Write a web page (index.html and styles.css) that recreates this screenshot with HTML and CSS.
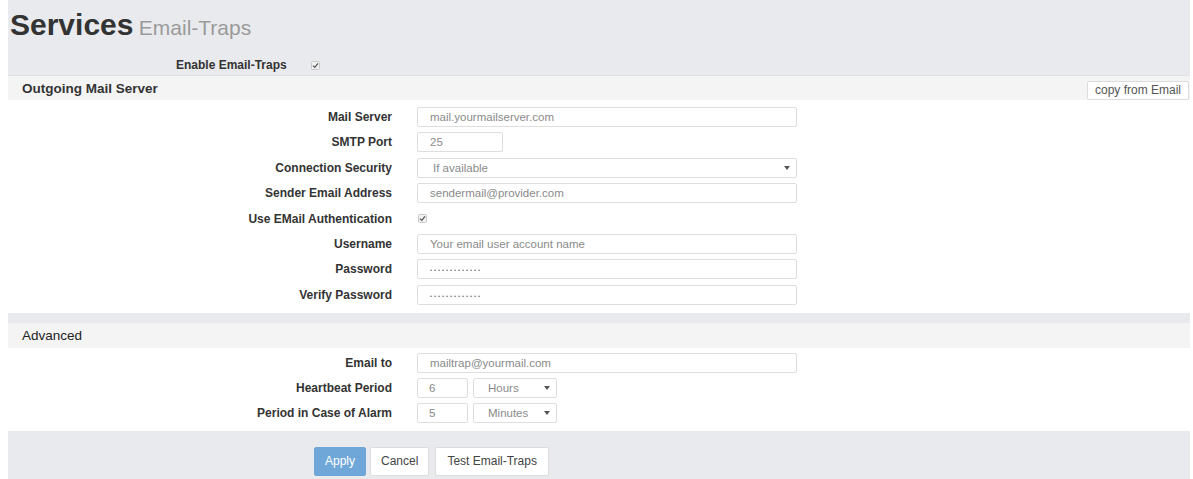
FILE: index.html
```html
<!DOCTYPE html>
<html>
<head>
<meta charset="utf-8">
<link rel="stylesheet" href="styles.css">
</head>
<body>
<div class="panel">
  <div class="top">
    <h1 class="title">Services <span class="subtitle">Email-Traps</span></h1>
    <div class="enable-row">
      <span class="enable-label">Enable Email-Traps</span>
      <span class="check"><svg width="9" height="9" viewBox="0 0 9 9"><rect x="0.5" y="0.5" width="8" height="8" rx="1" fill="#f2f2f2" stroke="#c8c8c8"/><path d="M2 4.6 L3.8 6.4 L7 2.4" fill="none" stroke="#555" stroke-width="1.3"/></svg></span>
    </div>
  </div>

  <div class="section-head">
    <span class="section-title">Outgoing Mail Server</span>
    <span class="copy-btn">copy from Email</span>
  </div>
  <div class="section-body grid-main">
    <div class="label">Mail Server</div>
    <div class="field wide">mail.yourmailserver.com</div>
    <div class="label">SMTP Port</div>
    <div class="field port">25</div>
    <div class="label">Connection Security</div>
    <div class="field wide select"><span class="sel-text">If available</span><svg class="arrow" width="6" height="4" viewBox="0 0 6 4"><path d="M0 0 H6 L3 4 Z" fill="#555"/></svg></div>
    <div class="label">Sender Email Address</div>
    <div class="field wide">sendermail@provider.com</div>
    <div class="label">Use EMail Authentication</div>
    <div class="check-cell"><svg width="9" height="9" viewBox="0 0 9 9"><rect x="0.5" y="0.5" width="8" height="8" rx="1" fill="#f2f2f2" stroke="#c8c8c8"/><path d="M2 4.6 L3.8 6.4 L7 2.4" fill="none" stroke="#555" stroke-width="1.3"/></svg></div>
    <div class="label">Username</div>
    <div class="field wide">Your email user account name</div>
    <div class="label">Password</div>
    <div class="field wide"><span class="dots">•••••••••••••</span></div>
    <div class="label">Verify Password</div>
    <div class="field wide"><span class="dots">•••••••••••••</span></div>
  </div>

  <div class="section-head adv">
    <span class="section-title plain">Advanced</span>
  </div>
  <div class="section-body grid-adv">
    <div class="label">Email to</div>
    <div class="field wide">mailtrap@yourmail.com</div>
    <div class="label">Heartbeat Period</div>
    <div class="pair">
      <div class="field num">6</div>
      <div class="field unit select"><span class="sel-text">Hours</span><svg class="arrow" width="6" height="4" viewBox="0 0 6 4"><path d="M0 0 H6 L3 4 Z" fill="#555"/></svg></div>
    </div>
    <div class="label">Period in Case of Alarm</div>
    <div class="pair">
      <div class="field num">5</div>
      <div class="field unit select"><span class="sel-text">Minutes</span><svg class="arrow" width="6" height="4" viewBox="0 0 6 4"><path d="M0 0 H6 L3 4 Z" fill="#555"/></svg></div>
    </div>
  </div>

  <div class="actions">
    <span class="btn primary">Apply</span>
    <span class="btn">Cancel</span>
    <span class="btn wide-btn">Test Email-Traps</span>
  </div>
</div>
</body>
</html>
```

FILE: styles.css
```css
html, body {
  margin: 0;
  padding: 0;
  background: #ffffff;
}
body {
  font-family: "Liberation Sans", Arial, sans-serif;
  color: #333;
}
.panel {
  width: 1182px;
  margin-left: 8px;
  background: #e9eaed;
  padding-bottom: 2px;
}
.top {
  height: 75px;
}
.title {
  margin: 0;
  padding: 8px 0 0 2px;
  font-size: 30px;
  line-height: 34px;
  font-weight: bold;
  color: #333;
}
.subtitle {
  font-size: 21px;
  font-weight: normal;
  color: #9a9a9a;
  margin-left: -3px;
}
.enable-row {
  display: flex;
  align-items: center;
  height: 26px;
  padding-top: 7px;
  padding-left: 168px;
}
.enable-label {
  font-size: 12px;
  font-weight: bold;
  color: #333;
}
.check {
  display: flex;
  margin-left: 24px;
}
.section-head {
  height: 25px;
  box-sizing: border-box;
  background: #f4f4f5;
  border-top: 1px solid #e0e1e4;
  display: flex;
  justify-content: space-between;
  align-items: center;
  padding-left: 14px;
}
.section-title {
  font-size: 13.5px;
  font-weight: bold;
  color: #333;
}
.section-title.plain {
  font-weight: normal;
  font-size: 13.5px;
  color: #222;
}
.copy-btn {
  align-self: flex-end;
  height: 19px;
  box-sizing: border-box;
  margin-right: 1px;
  padding: 0 7px;
  background: #fff;
  border: 1px solid #dcdcdc;
  border-radius: 2px;
  font-size: 12px;
  line-height: 17px;
  color: #555;
}
.section-body {
  background: #fff;
  display: grid;
  grid-template-columns: 384px 1fr;
  column-gap: 25px;
  align-items: center;
}
.grid-main {
  padding: 7px 0 8px;
  row-gap: 5.4px;
  margin-bottom: 10px;
}
.adv {
  border-top: none;
}
.grid-adv {
  padding: 5px 0 8px;
  row-gap: 5px;
}
.label {
  font-size: 12px;
  font-weight: bold;
  color: #333;
  text-align: right;
  line-height: 20px;
}
.field {
  height: 20px;
  box-sizing: border-box;
  border: 1px solid #dedede;
  border-radius: 2px;
  background: #fff;
  font-size: 11.5px;
  line-height: 18px;
  color: #8a8a8a;
  padding-left: 12px;
  white-space: nowrap;
}
.wide {
  width: 380px;
}
.port {
  width: 86px;
}
.select {
  display: flex;
  align-items: center;
  justify-content: space-between;
  padding-right: 6px;
}
.select .sel-text {
  padding-left: 3px;
}
.arrow {
  flex: none;
}
.dots {
  font-size: 6px;
  letter-spacing: 1.9px;
  color: #777;
  position: relative;
  top: -1px;
}
.check-cell {
  display: flex;
  align-items: center;
  height: 20px;
  padding-left: 1px;
}
.pair {
  display: flex;
  gap: 5px;
}
.num {
  width: 51px;
  padding-left: 11px;
}
.unit {
  width: 84px;
  padding-left: 14px;
  padding-right: 6px;
}
.unit .sel-text {
  padding-left: 0;
}
.actions {
  display: flex;
  gap: 4px;
  padding: 16px 0 0 306px;
  height: 30px;
}
.btn {
  height: 29px;
  box-sizing: border-box;
  padding: 0 10px;
  background: #fff;
  border: 1px solid #dcdcdc;
  border-radius: 2px;
  font-size: 12px;
  line-height: 27px;
  color: #444;
}
.btn.primary {
  background: #6fa7d8;
  border-color: #6fa7d8;
  color: #fff;
}
.btn.wide-btn {
  padding: 0 11px;
  margin-left: 2px;
}
```
